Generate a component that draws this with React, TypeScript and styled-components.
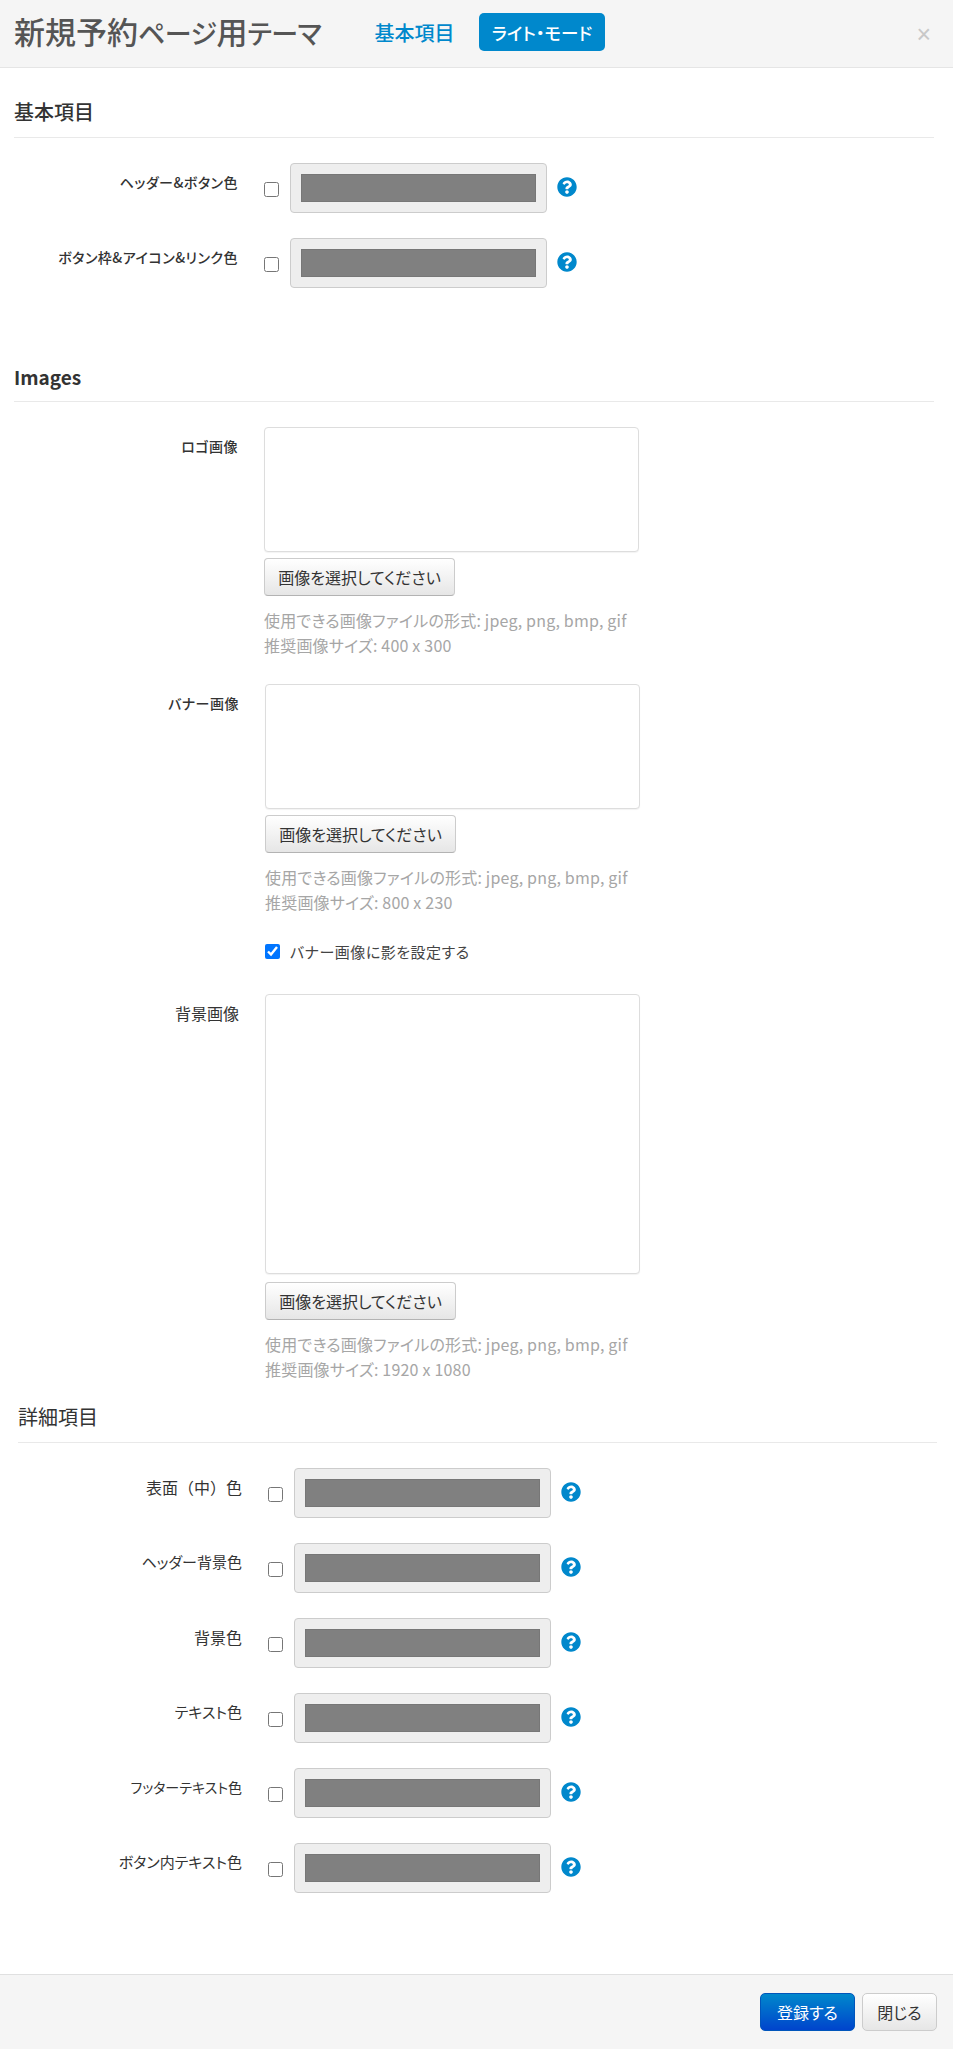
import React from "react";
import styled, { createGlobalStyle } from "styled-components";
import { FaQuestionCircle } from "react-icons/fa";

const GlobalStyle = createGlobalStyle`
  html, body {
    margin: 0;
    padding: 0;
    background: #fff;
  }
  body {
    font-family: "Noto Sans CJK JP", "Open Sans", sans-serif;
    font-feature-settings: "palt";
    color: #333;
  }
`;

const Modal = styled.div`
  display: flex;
  flex-direction: column;
  height: 2049px;
  overflow: hidden;
`;

const Header = styled.header`
  display: flex;
  align-items: center;
  flex: none;
  height: 64px;
  padding: 0 22px 3px 14px;
  background: #f5f5f5;
  border-bottom: 1px solid #e5e5e5;
`;

const Title = styled.h3`
  margin: 0;
  width: 362px;
  font-size: 31px;
  font-weight: 500;
  line-height: 40px;
  color: #555;
`;

const TitleKana = styled.span`
  font-size: 27px;
  letter-spacing: -0.5px;
`;

const Tab = styled.a<{ $active?: boolean }>`
  display: flex;
  align-items: center;
  justify-content: center;
  height: 38px;
  width: ${(p) => (p.$active ? "126px" : "103px")};
  margin-left: ${(p) => (p.$active ? "0" : "-13px")};
  margin-right: ${(p) => (p.$active ? "0" : "13px")};
  border-radius: 5px;
  font-size: ${(p) => (p.$active ? "17.5px" : "20px")};
  font-weight: 500;
  color: ${(p) => (p.$active ? "#fff" : "#0088cc")};
  background: ${(p) => (p.$active ? "#0088cc" : "transparent")};
`;

const CloseButton = styled.span`
  margin-left: auto;
  margin-top: 5px;
  font-family: "Liberation Sans", sans-serif;
  font-size: 25px;
  line-height: 25px;
  color: #c8c8c8;
`;

const Section = styled.section<{ $offset?: number; $top: number }>`
  margin-top: ${(p) => p.$top}px;
  margin-left: ${(p) => p.$offset ?? 14}px;
  margin-right: ${(p) => (p.$offset ? 16 : 19)}px;
`;

const SectionTitle = styled.h4<{ $latin?: boolean; $light?: boolean }>`
  margin: 0 0 25px;
  height: 48px;
  line-height: ${(p) => (p.$latin ? "48px" : "46px")};
  border-bottom: 1px solid #e9e9e9;
  font-size: ${(p) => (p.$latin ? "19px" : "20px")};
  font-weight: ${(p) => (p.$latin ? 700 : p.$light ? 400 : 500)};
  color: #333;
`;

const ColorRow = styled.div`
  display: flex;
  height: 50px;
  margin-bottom: 25px;
`;

const FieldLabel = styled.label<{ $size?: number }>`
  flex: none;
  width: 224px;
  margin-right: 26px;
  padding-top: 8px;
  text-align: right;
  font-size: ${(p) => p.$size ?? 14}px;
  font-feature-settings: ${(p) => (p.$size === 16 ? "normal" : '"palt"')};
  letter-spacing: ${(p) => (p.$size ? 0 : 0.5)}px;
  line-height: 22px;
  font-weight: ${(p) => (p.$size ? 400 : 500)};
  color: #333;
`;

const Check = styled.input.attrs({ type: "checkbox" })`
  flex: none;
  width: 15px;
  height: 15px;
  margin: 19px 11px 0 0;
`;

const ColorWell = styled.div`
  flex: none;
  box-sizing: border-box;
  width: 257px;
  height: 50px;
  padding: 10px;
  background: #eee;
  border: 1px solid #ccc;
  border-radius: 4px;
`;

const Swatch = styled.div`
  height: 28px;
  box-sizing: border-box;
  background: #808080;
  border: 1px solid #777;
`;

const HelpIcon = styled(FaQuestionCircle)`
  flex: none;
  width: 20px;
  height: 20px;
  margin: 14px 0 0 10px;
  color: #0088cc;
`;

const ImageField = styled.div<{ $shift?: boolean }>`
  display: flex;
  margin-bottom: 26px;
  margin-left: ${(p) => (p.$shift ? 1 : 0)}px;
`;

const ImageColumn = styled.div`
  display: flex;
  flex-direction: column;
  align-items: flex-start;
`;

const Preview = styled.div<{ $height: number; $gap: number }>`
  box-sizing: border-box;
  width: 375px;
  height: ${(p) => p.$height}px;
  margin-bottom: ${(p) => p.$gap}px;
  background: #fff;
  border: 1px solid #ddd;
  border-radius: 4px;
  box-shadow: 0 1px 1px rgba(0, 0, 0, 0.05);
`;

const PickButton = styled.button`
  box-sizing: border-box;
  width: 191px;
  height: 38px;
  padding: 0;
  font: inherit;
  font-size: 16px;
  color: #333;
  background: linear-gradient(to bottom, #ffffff, #e6e6e6);
  border: 1px solid #ccc;
  border-bottom-color: #b3b3b3;
  border-radius: 4px;
`;

const HelpText = styled.p`
  margin: 12px 0 0;
  font-size: 16px;
  letter-spacing: 0.2px;
  line-height: 25px;
  color: #a6a6a6;
`;

const ShadowRow = styled.label`
  display: flex;
  align-items: center;
  height: 24px;
  margin: -2px 0 31px 251px;
  font-size: 15px;
  letter-spacing: 0.5px;
  color: #444;
`;

const ShadowCheck = styled(Check)`
  margin: 0 10px 0 0;
`;

const Footer = styled.footer`
  display: flex;
  justify-content: flex-end;
  align-items: flex-start;
  gap: 7px;
  flex: none;
  box-sizing: border-box;
  height: 75px;
  margin-top: auto;
  padding: 18px 16px 0 0;
  background: #f5f5f5;
  border-top: 1px solid #e0e0e0;
`;

const FooterButton = styled.button<{ $primary?: boolean }>`
  box-sizing: border-box;
  width: ${(p) => (p.$primary ? "95px" : "75px")};
  height: 38px;
  padding: 0;
  font: inherit;
  font-size: 16px;
  color: ${(p) => (p.$primary ? "#fff" : "#333")};
  background: ${(p) =>
    p.$primary
      ? "linear-gradient(to bottom, #0088cc, #0044cc)"
      : "linear-gradient(to bottom, #ffffff, #e6e6e6)"};
  border: 1px solid ${(p) => (p.$primary ? "#0055bb" : "#ccc")};
  border-radius: 5px;
`;

const ColorField = ({ label, size }: { label: string; size?: number }) => (
  <ColorRow>
    <FieldLabel $size={size}>{label}</FieldLabel>
    <Check />
    <ColorWell>
      <Swatch />
    </ColorWell>
    <HelpIcon />
  </ColorRow>
);

const ImagePicker = ({
  label,
  labelSize,
  height,
  gap = 6,
  size,
  shift,
}: {
  label: string;
  labelSize?: number;
  height: number;
  gap?: number;
  size: string;
  shift?: boolean;
}) => (
  <ImageField $shift={shift}>
    <FieldLabel $size={labelSize}>{label}</FieldLabel>
    <ImageColumn>
      <Preview $height={height} $gap={gap} />
      <PickButton>画像を選択してください</PickButton>
      <HelpText>
        使用できる画像ファイルの形式: jpeg, png, bmp, gif
        <br />
        推奨画像サイズ: {size}
      </HelpText>
    </ImageColumn>
  </ImageField>
);

const App = () => {
  return (
    <Modal>
      <GlobalStyle />
      <Header>
        <Title>
          新規予約<TitleKana>ページ</TitleKana>用<TitleKana>テーマ</TitleKana>
        </Title>
        <Tab>基本項目</Tab>
        <Tab $active>ライト・モード</Tab>
        <CloseButton>×</CloseButton>
      </Header>

      <Section $top={21}>
        <SectionTitle>基本項目</SectionTitle>
        <ColorField label="ヘッダー&ボタン色" />
        <ColorField label="ボタン枠&アイコン&リンク色" />
      </Section>

      <Section $top={40}>
        <SectionTitle $latin>Images</SectionTitle>
        <ImagePicker label="ロゴ画像" height={125} size="400 x 300" />
        <ImagePicker label="バナー画像" height={125} size="800 x 230" shift />
        <ShadowRow>
          <ShadowCheck defaultChecked />
          バナー画像に影を設定する
        </ShadowRow>
        <ImagePicker
          label="背景画像"
          labelSize={16}
          height={280}
          gap={8}
          size="1920 x 1080"
          shift
        />
      </Section>

      <Section $top={-14} $offset={18}>
        <SectionTitle $light>詳細項目</SectionTitle>
        <ColorField label="表面（中）色" size={16} />
        <ColorField label="ヘッダー背景色" size={15} />
        <ColorField label="背景色" size={16} />
        <ColorField label="テキスト色" size={15} />
        <ColorField label="フッターテキスト色" size={14} />
        <ColorField label="ボタン内テキスト色" size={15} />
      </Section>

      <Footer>
        <FooterButton $primary>登録する</FooterButton>
        <FooterButton>閉じる</FooterButton>
      </Footer>
    </Modal>
  );
};

export default App;
